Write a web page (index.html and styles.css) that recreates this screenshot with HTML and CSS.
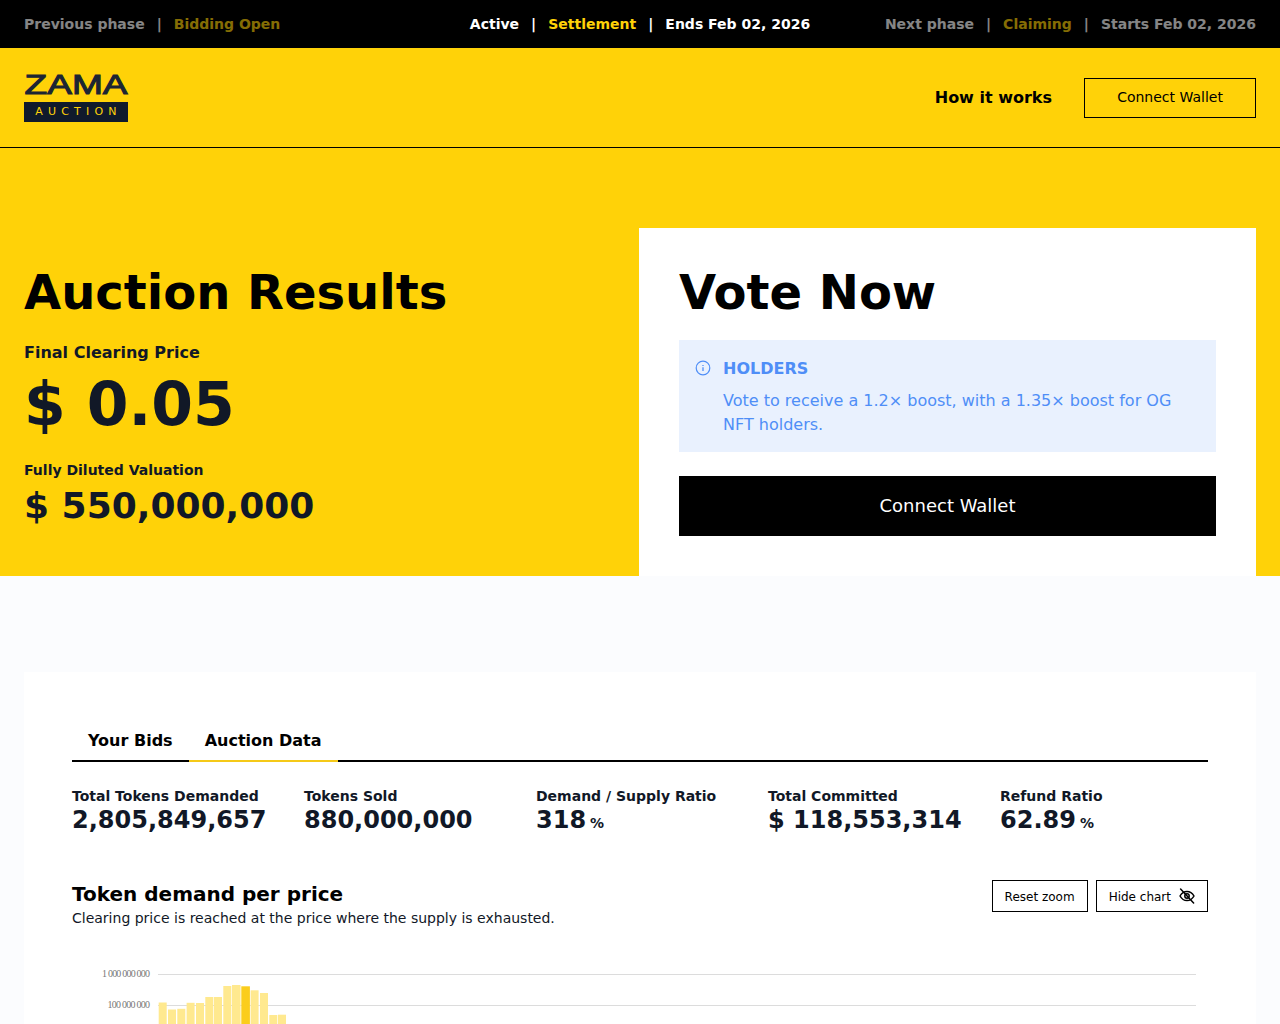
FILE: index.html
```html
<!DOCTYPE html>
<html lang="en">
<head>
<meta charset="utf-8">
<title>Zama Auction</title>
<link rel="stylesheet" href="styles.css">
</head>
<body>
<div class="phasebar">
  <div class="phase phase-dim phase-start"><span>Previous phase</span><i>|</i><span class="accent">Bidding Open</span></div>
  <div class="phase"><span>Active</span><i>|</i><span class="accent">Settlement</span><i>|</i><span>Ends Feb 02, 2026</span></div>
  <div class="phase phase-dim phase-end"><span>Next phase</span><i>|</i><span class="accent">Claiming</span><i>|</i><span>Starts Feb 02, 2026</span></div>
</div>
<header class="nav">
  <div class="logo">
    <svg class="logo-word" width="104" height="24" viewBox="0 0 104 24"><text x="0.5" y="20" textLength="103" lengthAdjust="spacingAndGlyphs" class="logo-text">ZAMA</text></svg>
    <div class="logo-tag">AUCTION</div>
  </div>
  <div class="nav-right">
    <a class="nav-link">How it works</a>
    <button class="btn-outline">Connect Wallet</button>
  </div>
</header>
<section class="hero">
  <div class="results">
    <h1 class="hero-title">Auction Results</h1>
    <div class="label-lg">Final Clearing Price</div>
    <div class="price">$ 0.05</div>
    <div class="label-md">Fully Diluted Valuation</div>
    <div class="fdv">$ 550,000,000</div>
  </div>
  <div class="vote">
    <h1 class="hero-title">Vote Now</h1>
    <div class="notice">
      <svg class="notice-icon" width="16" height="16" viewBox="0 0 16 16" fill="none" stroke="currentColor"><circle cx="8" cy="8" r="6.8" stroke-width="1.2"/><path d="M8 7.2v3.8" stroke-width="1.3"/><path d="M8 4.9v1" stroke-width="1.3"/></svg>
      <div>
        <div class="notice-title">HOLDERS</div>
        <p class="notice-text">Vote to receive a 1.2× boost, with a 1.35× boost for OG NFT holders.</p>
      </div>
    </div>
    <button class="btn-solid">Connect Wallet</button>
  </div>
</section>
<main class="content">
  <div class="panel">
    <div class="tabs">
      <div class="tab">Your Bids</div>
      <div class="tab tab-active">Auction Data</div>
    </div>
    <div class="stats">
      <div class="stat"><div class="stat-label">Total Tokens Demanded</div><div class="stat-value">2,805,849,657</div></div>
      <div class="stat"><div class="stat-label">Tokens Sold</div><div class="stat-value">880,000,000</div></div>
      <div class="stat"><div class="stat-label">Demand / Supply Ratio</div><div class="stat-value">318<small>%</small></div></div>
      <div class="stat"><div class="stat-label">Total Committed</div><div class="stat-value">$ 118,553,314</div></div>
      <div class="stat"><div class="stat-label">Refund Ratio</div><div class="stat-value">62.89<small>%</small></div></div>
    </div>
    <div class="chart-head">
      <div>
        <h2 class="chart-title">Token demand per price</h2>
        <p class="chart-sub">Clearing price is reached at the price where the supply is exhausted.</p>
      </div>
      <div class="chart-actions">
        <button class="btn-small">Reset zoom</button>
        <button class="btn-small btn-icon">Hide chart
          <svg width="16" height="16" viewBox="0 0 16 16" fill="none" stroke="currentColor" stroke-width="1.5" stroke-linecap="round" stroke-linejoin="round"><path d="M1 8s2.6-4.6 7-4.6S15 8 15 8s-2.6 4.6-7 4.6S1 8 1 8z"/><circle cx="8" cy="8" r="2.2"/><path d="M1.6 1l13 14"/></svg>
        </button>
      </div>
    </div>
    <svg class="chart" width="1136" height="60" viewBox="72 964 1136 60">
      <text class="axis" x="150" y="977" text-anchor="end" textLength="48" lengthAdjust="spacing">1 000 000 000</text>
      <text class="axis" x="150" y="1008" text-anchor="end" textLength="42.5" lengthAdjust="spacing">100 000 000</text>
      <line class="grid" x1="158" y1="974.5" x2="1196" y2="974.5"/>
      <line class="grid" x1="158" y1="1005.5" x2="1196" y2="1005.5"/>
      <g class="bars">
        <rect x="158.7" y="1002.5" width="8" height="32"/>
        <rect x="168" y="1009.5" width="8" height="25"/>
        <rect x="177.3" y="1008.8" width="8" height="26"/>
        <rect x="186.6" y="1002.8" width="8" height="32"/>
        <rect x="196" y="1003" width="8" height="31"/>
        <rect x="205.3" y="997" width="8" height="37"/>
        <rect x="214" y="997" width="8" height="37"/>
        <rect x="223.3" y="986" width="8" height="48"/>
        <rect x="232" y="985" width="8.6" height="49"/>
        <rect class="bar-hit" x="241.3" y="986.3" width="8.6" height="48"/>
        <rect x="250.6" y="990.3" width="8" height="44"/>
        <rect x="260" y="993" width="8" height="41"/>
        <rect x="269.3" y="1015" width="8" height="19"/>
        <rect x="278" y="1014.7" width="8" height="19"/>
      </g>
    </svg>
  </div>
</main>
</body>
</html>
```
FILE: styles.css
```css
* { box-sizing: border-box; }
html, body { margin: 0; height: 1024px; overflow: hidden; }
body { font-family: "DejaVu Sans", sans-serif; background: #fbfcfe; color: #000; }
h1, h2, p { margin: 0; }
button { font-family: inherit; cursor: pointer; }

.phasebar { height: 48px; background: #000; color: #fff; display: grid; grid-template-columns: 1fr auto 1fr; align-items: center; padding: 0 24px; font-size: 14px; font-weight: 700; }
.phase { display: flex; gap: 12px; }
.phase-end { justify-content: flex-end; }
.phase i { font-style: normal; font-weight: 700; }
.phase .accent { color: #ffd208; }
.phase-dim { opacity: 0.52; }

.nav { height: 100px; background: #ffd208; border-bottom: 1px solid #000; display: flex; justify-content: space-between; align-items: center; padding: 0 24px; }
.logo { display: flex; flex-direction: column; gap: 4px; width: 104px; padding-top: 1px; }
.logo-word { display: block; overflow: visible; }
.logo-text { font-family: "Liberation Sans", sans-serif; font-size: 28px; font-weight: 400; fill: #1c2533; stroke: #1c2533; stroke-width: 1px; }
.logo-tag { height: 20px; padding-left: 5px; background: #101a2c; color: #ffd208; font-size: 11px; line-height: 20px; letter-spacing: 5.2px; text-align: center; white-space: nowrap; }
.nav-right { display: flex; align-items: center; gap: 32px; }
.nav-link { font-size: 16px; font-weight: 700; }
.btn-outline { width: 172px; height: 40px; padding-bottom: 2px; background: transparent; border: 1px solid #000; font-size: 14px; color: #000; }

.hero { height: 428px; background: #ffd208; padding: 80px 24px 0; display: flex; }
.results { flex: 0 0 615px; padding-top: 36px; color: #111827; }
.hero-title { font-size: 48px; line-height: 56px; font-weight: 700; color: #000; }
.results .hero-title { margin-bottom: 21px; }
.label-lg { font-size: 16px; line-height: 24px; font-weight: 700; }
.price { font-size: 60px; line-height: 72px; font-weight: 700; margin-top: 3px; }
.label-md { font-size: 14px; line-height: 20px; font-weight: 700; margin-top: 20px; }
.fdv { font-size: 36px; line-height: 40px; font-weight: 700; margin-top: 6px; }
.vote { flex: 1; background: #fff; padding: 36px 40px 40px; }
.notice { margin-top: 20px; height: 112px; background: #e9f1fe; color: #4f8ef7; display: flex; gap: 12px; padding: 17px 16px 0; }
.notice-icon { flex: none; margin-top: 3px; }
.notice-title { font-size: 16px; line-height: 24px; font-weight: 700; }
.notice-text { font-size: 16px; line-height: 24px; margin-top: 8px; }
.btn-solid { display: block; width: 100%; height: 60px; margin-top: 24px; padding-bottom: 2px; background: #000; color: #fff; border: 0; font-size: 18px; }

.content { padding: 96px 24px 0; }
.panel { background: #fff; padding: 48px; height: 500px; }
.tabs { display: flex; border-bottom: 2px solid #000; height: 42px; padding-top: 1px; }
.tab { padding: 0 16px; font-size: 16px; line-height: 40px; font-weight: 700; color: #000; }
.tab-active { border-bottom: 2px solid #f5c918; height: 41px; }
.stats { display: grid; grid-template-columns: repeat(5, 232px); margin-top: 24px; }
.stat-label { font-size: 14px; line-height: 20px; font-weight: 700; color: #111827; }
.stat-value { font-size: 24px; line-height: 28px; font-weight: 700; color: #111827; }
.stat-value small { font-size: 14px; margin-left: 4px; }
.chart-head { display: flex; justify-content: space-between; align-items: flex-start; margin-top: 43px; }
.chart-title { font-size: 20px; line-height: 28px; font-weight: 700; color: #000; }
.chart-sub { font-size: 14px; line-height: 20px; color: #111827; }
.chart-actions { display: flex; gap: 8px; }
.btn-small { height: 32px; padding: 1px 12px 0; background: transparent; border: 1px solid #000; font-size: 12px; color: #000; display: flex; align-items: center; gap: 8px; }
.btn-icon svg { margin-top: -1px; }
.chart { display: block; margin-top: 36px; }
.axis { font-family: "Liberation Serif", serif; font-size: 10px; fill: #777; }
.grid { stroke: #dcdcdc; stroke-width: 1; }
.bars rect { fill: #ffe98f; }
.bars .bar-hit { fill: #fbcd1c; }
```
